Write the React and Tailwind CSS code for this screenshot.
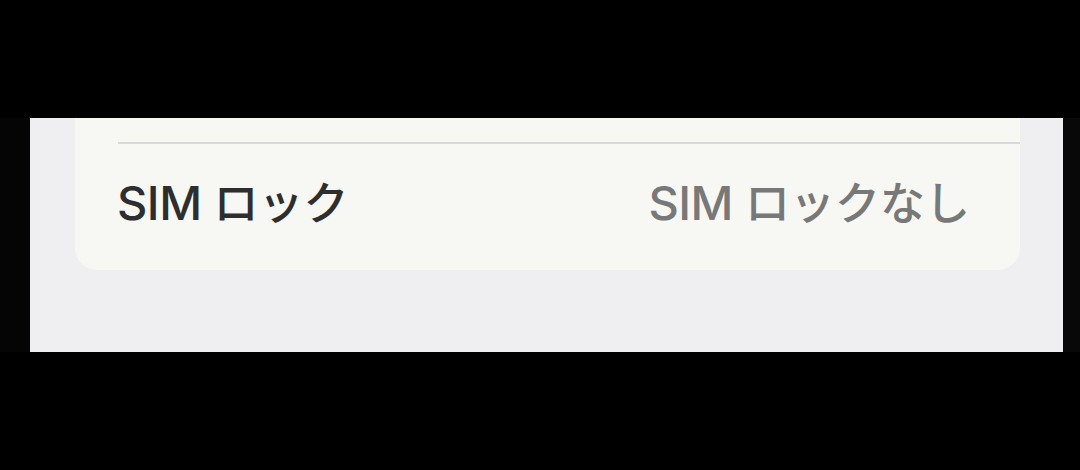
function Label({ latin, kana, className }) {
  return (
    <span className={"flex items-baseline " + className}>
      <span
        className="text-[47px] leading-none font-medium tracking-[-0.5px]"
        style={{ fontFamily: 'Inter, "Liberation Sans", sans-serif' }}
      >
        {latin}
      </span>
      <span
        className="ml-[12px] text-[45px] leading-none font-medium"
        style={{ fontFamily: '"Noto Sans CJK JP", sans-serif' }}
      >
        {kana}
      </span>
    </span>
  );
}

export default function App() {
  return (
    <div className="w-[1080px] h-[470px] bg-black flex flex-col overflow-hidden">
      <div className="h-[118px] shrink-0" />
      <div className="h-[234px] shrink-0 flex">
        <div className="w-[30px] shrink-0 bg-[#050505]" />
        <div className="flex-1 bg-[#efeff1] pl-[45px] pr-[43px]">
          <div className="h-[152px] bg-[#f7f7f4] rounded-b-[22px] flex flex-col">
            <div className="h-[24px]" />
            <div className="ml-[43px] h-[1.5px] bg-[#d9d9d9]" />
            <div className="flex-1 flex items-center justify-between pl-[42px] pr-[50px] pb-[10px]">
              <Label latin="SIM" kana="ロック" className="text-[#2e2e2e]" />
              <Label latin="SIM" kana="ロックなし" className="text-[#787878]" />
            </div>
          </div>
        </div>
        <div className="w-[17px] shrink-0 bg-[#080808]" />
      </div>
      <div className="flex-1" />
    </div>
  );
}
